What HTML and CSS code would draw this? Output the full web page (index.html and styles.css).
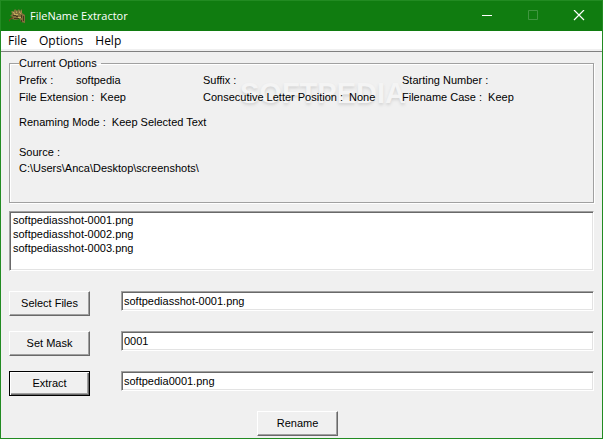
FILE: index.html
```html
<!DOCTYPE html>
<html lang="en">
<head>
    <meta charset="UTF-8">
    <meta name="viewport" content="width=device-width, initial-scale=1.0">
    <title>FileName Extractor</title>
    <link rel="stylesheet" href="styles.css">
</head>
<body>

<div class="window">
    <header class="title-bar">
        <svg class="app-icon" width="17" height="16" viewBox="0 0 17 16">
            <path fill="#80703c" d="M2 3l2 1 2-3 2 2 2-2 1 2 2-2v4l3 2v8l-4-1-1-3-5 1-3-1 1-2-3-1 2-2z"/>
            <path fill="#c8b060" d="M3 3l3 2v1L4 5zM7 2l1 3H7zM10 2l1 3h-1zM13 2l-1 4h-1zM5 6h4v1H5zM9 9h3v1H9z"/>
            <path fill="#43391f" d="M4 7h3v1H4zM7 8h2v1H7zM12 7h1v3h-1zM14 8h1v5h-1zM5 10h5v1H5zM12 12h1v2h-1z"/>
            <path fill="#8a3a20" d="M4 9v1l-3 2-1 2v-2l2-2z"/>
        </svg>
        <h1 class="title">FileName Extractor</h1>
        <button class="window-button" aria-label="Minimize">
            <svg width="12" height="12" viewBox="0 0 12 12"><path d="M1 5.5h10" stroke="#fff" fill="none"/></svg>
        </button>
        <button class="window-button" aria-label="Maximize" disabled>
            <svg width="12" height="12" viewBox="0 0 12 12"><path d="M1.5 .5h9v9h-9z" stroke="#409640" fill="none"/></svg>
        </button>
        <button class="window-button" aria-label="Close">
            <svg width="12" height="12" viewBox="0 0 12 12"><path d="M1 0l10 10M11 0L1 10" stroke="#fff" stroke-width="1.2" fill="none"/></svg>
        </button>
    </header>

    <nav class="menu-bar">
        <button class="menu-item">File</button>
        <button class="menu-item">Options</button>
        <button class="menu-item">Help</button>
    </nav>

    <main class="content">
        <fieldset class="options">
            <legend>Current Options</legend>
            <div class="watermark" aria-hidden="true">SOFTPEDIA</div>
            <div class="option-grid">
                <div class="option"><span class="prefix-label">Prefix :</span><span>softpedia</span></div>
                <div class="option"><span>Suffix :</span></div>
                <div class="option"><span>Starting Number :</span></div>
                <div class="option"><span>File Extension :</span><span>Keep</span></div>
                <div class="option"><span>Consecutive Letter Position :</span><span>None</span></div>
                <div class="option"><span>Filename Case :</span><span>Keep</span></div>
            </div>
            <div class="option mode"><span>Renaming Mode :</span><span>Keep Selected Text</span></div>
            <div class="source">
                <div>Source :</div>
                <div>C:\Users\Anca\Desktop\screenshots\</div>
            </div>
        </fieldset>

        <select class="file-list sunken" size="4" aria-label="Files">
            <option>softpediasshot-0001.png</option>
            <option>softpediasshot-0002.png</option>
            <option>softpediasshot-0003.png</option>
        </select>

        <form class="actions">
            <div class="row">
                <button type="button" class="button" id="select-files">Select Files</button>
                <input type="text" class="field sunken" aria-labelledby="select-files" value="softpediasshot-0001.png">
            </div>
            <div class="row">
                <button type="button" class="button" id="set-mask">Set Mask</button>
                <input type="text" class="field sunken" aria-labelledby="set-mask" value="0001">
            </div>
            <div class="row">
                <button type="button" class="button default" id="extract">Extract</button>
                <input type="text" class="field sunken" aria-labelledby="extract" value="softpedia0001.png">
            </div>
            <div class="footer">
                <button type="button" class="button">Rename</button>
            </div>
        </form>
    </main>
</div>

</body>
</html>
```
FILE: styles.css
```css
* {
    box-sizing: border-box;
}
body {
    margin: 0;
    font-family: "Liberation Sans", Arial, sans-serif;
    font-size: 11px;
    line-height: 16px;
    color: #000;
}
button, input, select {
    font: inherit;
    color: inherit;
    border-radius: 0;
}
.window {
    min-height: 100vh;
    border: 1px solid #228b22;
    background-color: #f0f0f0;
}

/* title bar */
.title-bar {
    display: flex;
    align-items: center;
    height: 30px;
    padding-left: 8px;
    background-color: #107c10;
    color: #fff;
}
.title {
    flex: 1;
    margin: 0 0 0 4px;
    font-family: "Open Sans", sans-serif;
    font-size: 11px;
    font-weight: normal;
}
.window-button {
    display: flex;
    align-items: center;
    justify-content: center;
    width: 46px;
    height: 28px;
    padding: 0;
    border: 0;
    background: none;
}

/* menu */
.menu-bar {
    display: flex;
    height: 18px;
    padding-left: 1px;
    background-color: #fff;
}
.menu-item {
    padding: 1px 6px 0;
    border: 0;
    background: none;
    font-family: "Open Sans", sans-serif;
    font-size: 12px;
    line-height: 18px;
}

.content {
    margin-top: 2px;
    padding: 5px 8px 2px;
    border-top: 1px solid #808080;
}

/* current options */
.options {
    position: relative;
    height: 146px;
    margin: 0;
    padding: 2px 9px;
    border: 1px solid #a0a0a0;
    box-shadow: 1px 1px 0 #fff, inset 1px 1px 0 #fff;
}
.options legend {
    padding: 0 4px 0 0;
    line-height: 13px;
}
.option-grid {
    display: grid;
    grid-template-columns: 184px 199px auto;
    row-gap: 1px;
}
.option {
    display: flex;
    gap: 6px;
    white-space: nowrap;
}
.prefix-label {
    width: 51px;
}
.mode {
    margin-top: 9px;
}
.source {
    margin-top: 14px;
}
.watermark {
    position: absolute;
    top: 7px;
    left: 230px;
    font-size: 29px;
    font-weight: bold;
    line-height: 32px;
    color: #f4f4f4;
    text-shadow: 0 2px 3px #d4d4d4;
}
.option-grid, .mode, .source {
    position: relative;
}

/* file list and fields */
.sunken {
    border: 1px solid;
    border-color: #a0a0a0 #fff #fff #a0a0a0;
    box-shadow: inset 1px 1px 0 #696969, inset -1px -1px 0 #e3e3e3;
    background-color: #fff;
    outline: none;
}
.file-list {
    display: block;
    width: 100%;
    height: 60px;
    margin-top: 8px;
    padding: 2px 1px;
    overflow: hidden;
}
.file-list option {
    min-height: 14px;
    padding: 0 2px;
    line-height: 14px;
}
.actions {
    display: flex;
    flex-direction: column;
    gap: 15px;
    margin-top: 20px;
}
.row {
    display: flex;
    gap: 31px;
}
.field {
    flex: 1;
    min-width: 0;
    height: 20px;
    padding: 0 2px;
}
.button {
    width: 81px;
    height: 25px;
    padding: 0 0 2px;
    border: 1px solid;
    border-color: #fff #696969 #696969 #fff;
    box-shadow: inset -1px -1px 0 #a0a0a0;
    background-color: #f0f0f0;
}
.default {
    border-color: #000;
    box-shadow: inset 1px 1px 0 #fff, inset -1px -1px 0 #696969, inset -2px -2px 0 #a0a0a0;
}
.footer {
    padding-right: 8px;
    text-align: center;
    line-height: 0;
}
.footer .button {
    line-height: 16px;
}
```
